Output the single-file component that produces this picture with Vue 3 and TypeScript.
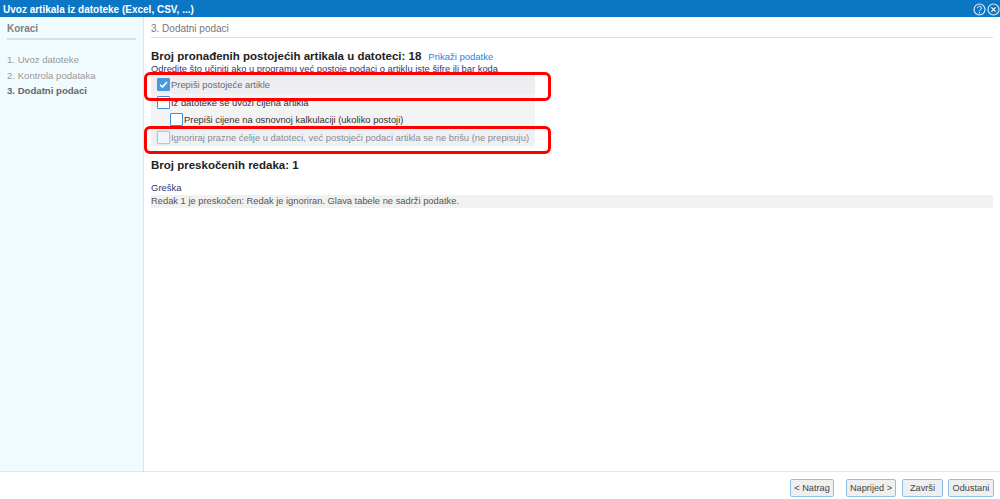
<script setup lang="ts">
const steps = ['1. Uvoz datoteke', '2. Kontrola podataka', '3. Dodatni podaci']
const buttons = [
  { label: '< Natrag', cls: 'back' },
  { label: 'Naprijed >', cls: 'next' },
  { label: 'Završi', cls: 'finish' },
  { label: 'Odustani', cls: 'cancel' },
]
</script>

<template>
  <div class="app">
    <header class="title">
      <span>Uvoz artikala iz datoteke (Excel, CSV, ...)</span>
      <span class="icons">
        <svg width="13" height="13" viewBox="0 0 13 13"><circle cx="6.5" cy="6.5" r="5.5" fill="none" stroke="#dff0fb" stroke-width="1.1"/><path d="M4.6 5.2a1.9 1.9 0 1 1 2.9 1.6c-.7.4-1 .7-1 1.4" fill="none" stroke="#fff" stroke-width="1"/><circle cx="6.5" cy="9.8" r=".7" fill="#fff"/></svg>
        <svg width="13" height="13" viewBox="0 0 13 13"><circle cx="6.5" cy="6.5" r="5.5" fill="none" stroke="#dff0fb" stroke-width="1.1"/><path d="M4.4 4.4l4.2 4.2M8.6 4.4l-4.2 4.2" stroke="#fff" stroke-width="1.2"/></svg>
      </span>
    </header>
    <div class="body">
      <aside class="side">
        <div class="side-head">Koraci</div>
        <ul class="steps">
          <li v-for="(s, i) in steps" :key="s" :class="{ current: i === 2 }">{{ s }}</li>
        </ul>
      </aside>
      <main class="main">
        <div class="main-head">3. Dodatni podaci</div>
        <div class="section">
          <h2>Broj pronađenih postojećih artikala u datoteci: 18<a class="link">Prikaži podatke</a></h2>
          <p class="hint">Odredite što učiniti ako u programu već postoje podaci o artiklu iste šifre ili bar koda</p>
          <div class="options">
            <label class="opt first"><span class="box checked"><svg width="13" height="13" viewBox="0 0 13 13"><path d="M2.5 6.8l2.8 2.8 5.2-6" fill="none" stroke="#fff" stroke-width="2"/></svg></span>Prepiši postojeće artikle</label>
            <label class="opt second"><span class="box"></span>Iz datoteke se uvozi cijena artikla</label>
            <label class="opt third"><span class="box"></span>Prepiši cijene na osnovnoj kalkulaciji (ukoliko postoji)</label>
            <label class="opt fourth"><span class="box soft"></span>Ignoriraj prazne ćelije u datoteci, već postojeći podaci artikla se ne brišu (ne prepisuju)</label>
          </div>
          <div class="mark mark-a"></div>
          <div class="mark mark-b"></div>
        </div>
        <h2 class="skipped">Broj preskočenih redaka: 1</h2>
        <div class="err-title">Greška</div>
        <div class="err-row">Redak 1 je preskočen: Redak je ignoriran. Glava tabele ne sadrži podatke.</div>
      </main>
    </div>
    <footer class="foot">
      <button v-for="b in buttons" :key="b.label" :class="b.cls">{{ b.label }}</button>
    </footer>
  </div>
</template>

<style>
html, body { margin: 0; background: #fff; }
</style>

<style scoped>
.app {
  width: 1000px; height: 499px; display: flex; flex-direction: column; overflow: hidden;
  font-family: "Liberation Sans", Arial, sans-serif; font-size: 9.4px; color: #666;
}
.title {
  height: 17px; flex: none; background: #0a76c4; color: #fff; font-weight: 700; font-size: 10px;
  display: flex; align-items: center; justify-content: space-between; padding: 1px 0 0 3px; box-sizing: border-box;
}
.icons { display: flex; gap: 1px; }
.body { flex: 1; display: flex; min-height: 0; }
.side { flex: none; background: #f0fbff; border-right: 1px solid #dbe5ea; padding: 0 7px; width: 129px; }
.side-head { height: 21px; line-height: 24px; font-weight: 700; font-size: 10px; color: #808080; border-bottom: 2px solid #dcdfe1; }
.steps { list-style: none; margin: 12px 0 0; padding: 0; }
.steps li { height: 15.5px; line-height: 15px; color: #999; font-size: 9.6px; }
.steps li.current { color: #666; font-weight: 700; }
.main { flex: 1; padding: 0 7px; min-width: 0; }
.main-head { height: 20px; line-height: 24px; font-size: 10px; color: #777; border-bottom: 1px solid #dcdfe1; }
.section { position: relative; padding-top: 12px; }
h2 { margin: 0; font-size: 11.5px; font-weight: 700; color: #222; line-height: 13px; }
.link { color: #2b7fe8; font-size: 9.5px; font-weight: 400; margin-left: 7px; }
.hint { margin: 0; color: #333378; font-size: 9.4px; line-height: 11px; height: 11px; }
.options { width: 384px; background: #f3f3f3; height: 72px; display: flex; flex-direction: column; }
.opt { display: flex; align-items: center; font-size: 9.4px; }
.box { width: 11px; height: 11px; border: 1px solid #3d8fd6; background: #fff; border-radius: 1px; margin-right: 1px; flex: none; display: flex; align-items: center; justify-content: center; }
.box.checked { background: #4a98dc; border-color: #4a98dc; }
.box.soft { border-color: #a9c7e6; background: #f1f4f8; box-shadow: 0 0 2px #b8d3ee; }
.first { height: 20px; background: #eceef2; padding-left: 6px; color: #6c6c6c; }
.second { height: 16px; padding-left: 6px; color: #333; }
.third { height: 18px; padding-left: 19px; color: #333; }
.fourth { height: 18px; padding-left: 6px; color: #8b8b8b; background: #eef0f5; }
.mark { position: absolute; border: 3px solid #f00; border-radius: 6px; box-sizing: border-box; left: -7px; width: 407px; pointer-events: none; }
.mark-a { top: 34px; height: 29px; }
.mark-b { top: 88px; height: 28px; }
.skipped { margin-top: 12px; line-height: 14px; }
.err-title { margin-top: 10px; color: #333378; font-size: 9.5px; line-height: 12px; }
.err-row { margin-top: 1px; background: #f1f1f1; color: #555; font-size: 9.36px; line-height: 13px; height: 13px; }
.foot {
  height: 28px; flex: none; box-sizing: border-box; border-top: 1px solid #e6e6e6; display: flex; justify-content: flex-end; align-items: flex-start;
  padding: 7px 6px 0 0;
}
button {
  font: 9.2px "Liberation Sans", Arial, sans-serif; color: #444; height: 18px; padding: 0; background: #efefef;
  border: 1px solid #8cc0ea; border-radius: 2px; box-sizing: border-box;
}
.back { width: 44px; margin-right: 12px; }
.next { width: 50px; margin-right: 6px; }
.finish { width: 41px; margin-right: 5px; }
.cancel { width: 46px; }
</style>
